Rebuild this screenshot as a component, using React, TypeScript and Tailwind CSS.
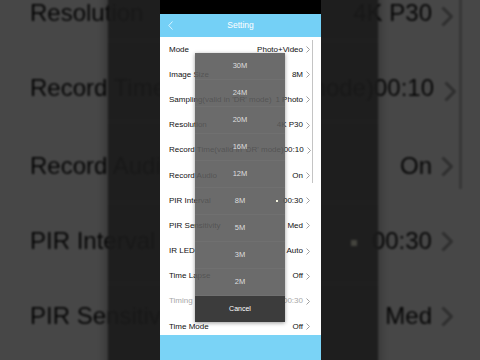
import React from 'react';

// settings rows as shown on the camera app
const rows = [
  { label: 'Mode', value: 'Photo+Video' },
  { label: 'Image Size', value: '8M' },
  { label: "Sampling(valid in 'DR' mode)", value: '1 Photo' },
  { label: 'Resolution', value: '4K P30' },
  { label: "Record Time(valid in 'DR' mode)", value: '00:10' },
  { label: 'Record Audio', value: 'On' },
  { label: 'PIR Interval', value: '00:30' },
  { label: 'PIR Sensitivity', value: 'Med' },
  { label: 'IR LED', value: 'Auto' },
  { label: 'Time Lapse', value: 'Off' },
  { label: 'Timing', value: '00:30', disabled: true },
  { label: 'Time Mode', value: 'Off' },
];

const sizes = ['30M', '24M', '20M', '16M', '12M', '8M', '5M', '3M', '2M'];

function Chevron() {
  return (
    <svg width="4" height="7" viewBox="0 0 4 7" className="shrink-0">
      <polyline points="0.5,0.5 3.5,3.5 0.5,6.5" fill="none" stroke="#a0a0a0" strokeWidth="1" />
    </svg>
  );
}

function Screen() {
  return (
    <div className="relative flex h-[360px] w-[161px] flex-col bg-white font-['Liberation_Sans',Arial,sans-serif]">
      <div className="h-[14px] bg-black" />
      <div className="relative flex h-[23px] items-center justify-center bg-[#74d0f6]">
        <svg width="5" height="9" viewBox="0 0 5 9" className="absolute left-[8px] top-[7px]">
          <polyline points="4.5,0.5 0.8,4.5 4.5,8.5" fill="none" stroke="#d6f2ff" strokeWidth="1" />
        </svg>
        <span className="text-[8.5px] text-white">Setting</span>
      </div>

      <div className="relative flex-1 overflow-hidden">
        {rows.map((r) => (
          <div key={r.label} className="flex h-[25.2px] items-center justify-between pl-[9px] pr-[11px]">
            <span className={`text-[8px] whitespace-nowrap ${r.disabled ? 'text-[#a8a8a8]' : 'text-[#111]'}`}>{r.label}</span>
            <div className="flex items-center gap-[3px]">
              <span className={`text-[8px] ${r.disabled ? 'text-[#a8a8a8]' : 'text-[#111]'}`}>{r.value}</span>
              <Chevron />
            </div>
          </div>
        ))}
        <div className="absolute left-[152px] top-[3px] h-[143px] w-[1px] bg-[#c4c4c4]" />
      </div>
      <div className="h-[25px] bg-[#7ad3f6]" />

      {/* picker dialog */}
      <div className="absolute left-[35px] top-[53px] flex w-[90px] flex-col shadow-[0_1px_4px_rgba(0,0,0,0.4)]">
        {sizes.map((s) => (
          <div key={s} className="relative flex h-[27px] items-center justify-center border-b border-[#707070] bg-[#5b5b5b]/90 text-[7.5px] text-[#dedede]">
            {s}
            {s === '8M' && <div className="absolute right-[7px] top-[12px] h-[2px] w-[2px] bg-[#f2f2dc]" />}
          </div>
        ))}
        <div className="flex h-[26px] items-center justify-center bg-[#3c3c3c] text-[7px] text-white">Cancel</div>
      </div>
    </div>
  );
}

export default function App() {
  return (
    <div className="relative h-[360px] w-[480px] overflow-hidden bg-[#474747]">
      {/* blurred, enlarged copy of the screen behind */}
      <div className="absolute inset-0 blur-[1px] brightness-[0.28]">
        <div className="absolute left-[3px] top-[-360px] origin-top-left scale-[3]">
          <Screen />
        </div>
      </div>
      <div className="absolute left-[160px] top-0">
        <Screen />
      </div>
    </div>
  );
}
